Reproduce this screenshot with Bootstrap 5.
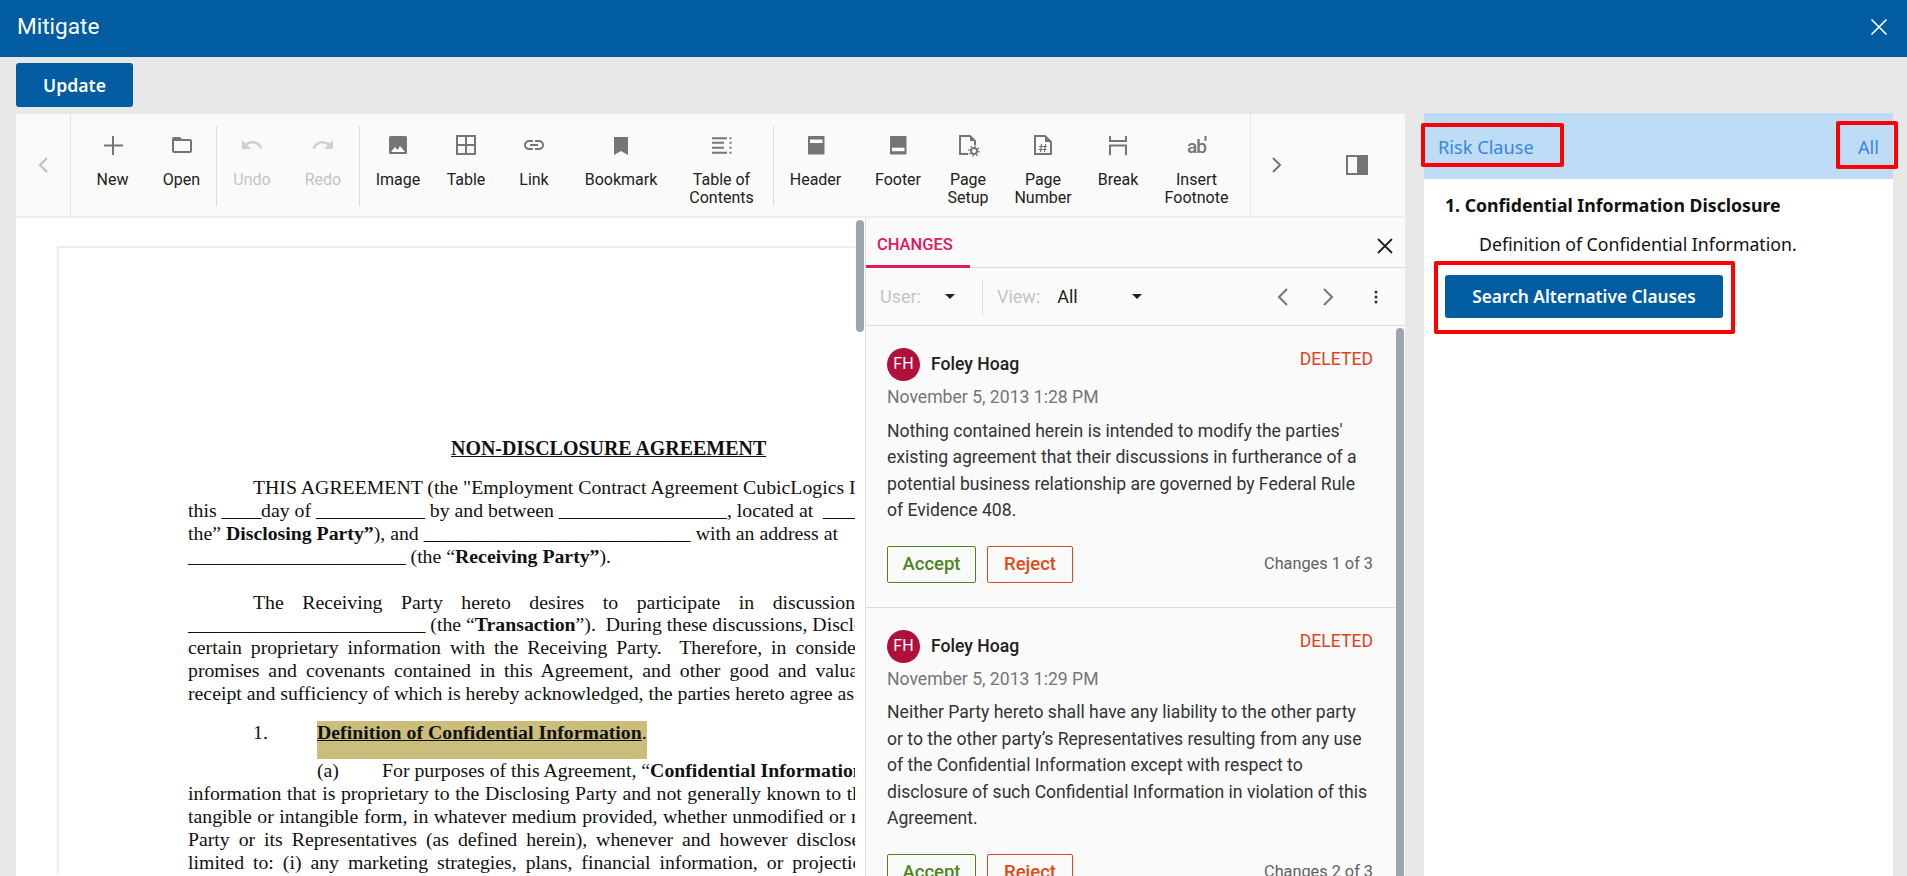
<!DOCTYPE html>
<html lang="en">
<head>
  <meta charset="UTF-8" />
  <meta name="viewport" content="width=device-width, initial-scale=1.0"/>
  <title>Mitigate</title>
  <link href="https://cdn.jsdelivr.net/npm/bootstrap@5.3.3/dist/css/bootstrap.min.css" rel="stylesheet">
  <style>
    body {
      background-color: #e8e8e8;
      font-family: Roboto, "Liberation Sans", sans-serif;
      color: #212121;
    }
    .app-head { height: 57px; background: #015ca1; padding: 0 19px 4px 17px; font-size: 22.6px; }
    .action-bar { height: 56px; padding: 6px 16px 0; }
    .btn-brand {
      background: #015ca1; color: #fff; border: 0; border-radius: 3px;
      font-family: "Noto Sans", sans-serif; font-weight: 600;
    }
    .btn-brand:hover { background: #015ca1; color: #fff; }
    .btn-update { width: 117px; height: 44px; font-size: 17.6px; padding: 0; }
    .workspace { height: 763px; padding-left: 16px; }
    .editor { width: 1389px; padding-top: 1px; }
    .tool-strip { height: 104px; background: #fafafa; border-bottom: 2px solid #eee; font-size: 16px; flex: none; }
    .nav-end { width: 55px; flex: none; border-right: 1px solid #e4e4e4; }
    .tool-tail { padding-left: 7px; flex: none; }
    .tool-item { flex: none; padding-top: 19px; line-height: 17.5px; color: #212121; }
    .tool-item svg { display: block; margin: 0 auto 14px; }
    .tool-item.is-off { color: #c4c4c4; }
    .tool-rule { width: 1px; height: 80px; margin-top: 12px; background: #dcdcdc; flex: none; }
    .tail-end { border-left: 1px solid #e4e4e4; margin-left: 4px; width: 155px; flex: none; padding-left: 20px; }
    .pane-icon { margin-left: 63px; }
    .editor-body { height: 658px; }
    .doc-area { width: 849px; background: #fff; overflow: hidden; }
    .doc-page {
      margin: 28px 0 0 41px; padding: 189px 0 0 129px; width: 798px;
      border: solid #eee; border-width: 2px 0 0 2px;
      font-family: "Liberation Serif", serif; font-size: 19.8px; line-height: 22.9px; color: #111;
      overflow: hidden;
    }
    .doc-line { white-space: nowrap; }
    .doc-title { font-weight: 700; text-decoration: underline; margin-left: 263px; font-size: 19.95px; }
    .doc-para { margin-top: 23px; }
    .doc-first { margin-top: 16px; }
    .in-1 { padding-left: 65px; }
    .in-2 { padding-left: 129px; }
    .hl-row { display: flex; height: 38px; margin-top: 16px; }
    .hl-num { width: 129px; padding-left: 65px; }
    .hl-text { width: 330px; background: #cbbd7c; font-weight: 700; white-space: nowrap; }
    .sp-1 { word-spacing: 13.6px; }
    .sp-2 { word-spacing: 4px; }
    .sp-3 { word-spacing: 0.6px; }
    .sub-tab { display: inline-block; width: 65px; }
    .doc-thumb { position: absolute; right: 1px; top: 2px; width: 8px; height: 112px; border-radius: 4px; background: #9ba6af; }
    .track-pane { width: 540px; background: #fafafa; border-left: 1px solid #e0e0e0; }
    .track-tabs { height: 50px; border-bottom: 1px solid #dcdcdc; flex: none; }
    .track-tab { width: 104px; height: 50px; padding: 15px 0 0 11px; border-bottom: 3px solid #e0185d; color: #e0185d; font-size: 16.5px; font-weight: 500; }
    .tab-close { margin: 19px 11px 0 0; }
    .track-tools { height: 58px; border-bottom: 1px solid #dcdcdc; padding: 0 25px 0 14px; font-size: 18px; flex: none; }
    .muted-label { color: #c4c4c4; }
    .tri { width: 0; height: 0; border: solid transparent; border-width: 5px 5px 0; border-top-color: #212121; display: inline-block; }
    .tri-user { margin-left: 24px; }
    .tool-sep { width: 1px; height: 36px; background: #dcdcdc; margin-left: 27px; }
    .view-label { margin-left: 14px; }
    .view-value { margin-left: 17px; }
    .tri-view { margin-left: 54px; }
    .nav-next { margin-left: 33px; }
    .nav-more { margin-left: 36px; }
    .track-list { overflow: hidden; flex: 1 1 auto; }
    .track-card { padding: 22px 23px 24px 21px; border-bottom: 1px solid #dcdcdc; width: 530px; }
    .track-thumb { position: absolute; right: 1px; top: 2px; width: 8px; height: 560px; border-radius: 4px 4px 0 0; background: #9ba6af; }
    .avatar-dot { width: 33px; height: 33px; border-radius: 50%; background: #b0103a; color: #fff; font-size: 16px; line-height: 31px; text-align: center; }
    .who-name { font-size: 17.6px; font-weight: 500; color: #212121; margin-left: 11px; }
    .del-tag { color: #e0431b; font-size: 17.6px; line-height: 22px; }
    .when-text { color: #757575; font-size: 17.6px; line-height: 20px; margin-top: 6px; }
    .body-text { font-size: 17.6px; line-height: 26.5px; margin: 10.5px 0 22px; color: #333; }
    .btn-acc, .btn-rej { height: 37px; font-size: 18.5px; font-weight: 500; padding: 0; background: transparent; border-radius: 2px; line-height: 33px; }
    .btn-acc { width: 89px; color: #4d841d; border: 1px solid #4d841d; }
    .btn-rej { width: 86px; color: #df4a17; border: 1px solid #df4a17; margin-left: 11px; }
    .count-text { color: #616161; font-size: 16.3px; }
    .clause-pane { width: 469px; margin-left: 19px; background: #fff; font-family: "Noto Sans", sans-serif; }
    .clause-head { height: 66px; background: #bedcf5; color: #3a86d8; font-size: 18.2px; padding: 4px 14px 0 14px; }
    .clause-body { padding: 14px 21px; color: #111; }
    .clause-title { font-weight: 700; font-size: 17.7px; line-height: 24px; }
    .clause-sub { font-size: 17.7px; line-height: 24px; margin: 15px 0 0 34px; }
    .btn-search { display: block; width: 278px; height: 43px; margin-top: 19px; padding: 0; font-size: 17.3px; }
    .red-box { position: absolute; border: 4px solid #f00; border-radius: 2px; pointer-events: none; }
    .box-risk { left: -3px; top: 10px; width: 143px; height: 44px; }
    .box-all { left: 412px; top: 8px; width: 62px; height: 48px; }
    .box-search { left: 10px; top: 148px; width: 301px; height: 73px; }
  </style>
</head>
<body class="vh-100 overflow-hidden">
  <div class="app-head d-flex align-items-center justify-content-between text-white">
    <span>Mitigate</span>
    <svg width="18" height="18" viewBox="0 0 18 18"><path d="M1.5 1.5l15 15M16.5 1.5l-15 15" stroke="#fff" stroke-width="1.6" fill="none"/></svg>
  </div>
  <div class="action-bar"><button class="btn btn-brand btn-update">Update</button></div>

  <div class="workspace d-flex">
    <div class="editor d-flex flex-column">
      <div class="tool-strip d-flex" id="tool-strip">
        <div class="nav-end d-flex align-items-center justify-content-center">
          <svg width="12" height="18" viewBox="0 0 12 18"><path d="M10 2L3 9l7 7" stroke="#bdbdbd" stroke-width="2" fill="none"/></svg>
        </div>
        <div class="tool-tail d-flex text-center" id="tool-items"></div>
        <div class="tail-end d-flex align-items-center">
          <svg width="12" height="18" viewBox="0 0 12 18"><path d="M2 2l7 7-7 7" stroke="#757575" stroke-width="2" fill="none"/></svg>
          <svg class="pane-icon" width="22" height="20" viewBox="0 0 22 20"><path d="M1 1h20v18H1z" fill="none" stroke="#757575" stroke-width="2"/><path d="M11 1h10v18H11z" fill="#757575"/></svg>
        </div>
      </div>

      <div class="editor-body d-flex">
        <div class="doc-area position-relative">
          <div class="doc-page">
            <div class="doc-line doc-title">NON-DISCLOSURE AGREEMENT</div>
            <div class="doc-first">
              <div class="doc-line in-1">THIS AGREEMENT (the "Employment Contract Agreement CubicLogics Inc.</div>
              <div class="doc-line">this ____day of ___________ by and between _________________, located at &nbsp;______</div>
              <div class="doc-line">the” <b>Disclosing Party”</b>), and ___________________________ with an address at</div>
              <div class="doc-line">______________________ (the “<b>Receiving Party”</b>).</div>
            </div>
            <div class="doc-para">
              <div class="doc-line in-1 sp-1">The Receiving Party hereto desires to participate in discussions</div>
              <div class="doc-line">________________________ (the “<b>Transaction</b>”).&nbsp; During these discussions, Disclosing</div>
              <div class="doc-line sp-2">certain proprietary information with the Receiving Party.&nbsp; Therefore, in consideration</div>
              <div class="doc-line sp-2">promises and covenants contained in this Agreement, and other good and valuable</div>
              <div class="doc-line">receipt and sufficiency of which is hereby acknowledged, the parties hereto agree as</div>
            </div>
            <div class="hl-row">
              <div class="hl-num">1.</div>
              <div class="hl-text"><u>Definition of Confidential Information</u><span class="fw-normal">.</span></div>
            </div>
            <div>
              <div class="doc-line in-2"><span class="sub-tab">(a)</span>For purposes of this Agreement, “<b>Confidential Information</b></div>
              <div class="doc-line sp-3">information that is proprietary to the Disclosing Party and not generally known to the</div>
              <div class="doc-line sp-3">tangible or intangible form, in whatever medium provided, whether unmodified or modified</div>
              <div class="doc-line sp-2">Party or its Representatives (as defined herein), whenever and however disclosed</div>
              <div class="doc-line sp-2">limited to: (i) any marketing strategies, plans, financial information, or projections</div>
            </div>
          </div>
          <div class="doc-thumb"></div>
        </div>

        <div class="track-pane d-flex flex-column">
          <div class="track-tabs d-flex justify-content-between">
            <div class="track-tab">CHANGES</div>
            <svg class="tab-close" width="18" height="18" viewBox="0 0 18 18"><path d="M2 2l14 14M16 2L2 16" stroke="#212121" stroke-width="1.8" fill="none"/></svg>
          </div>
          <div class="track-tools d-flex align-items-center">
            <span class="muted-label">User:</span>
            <span class="tri tri-user"></span>
            <span class="tool-sep"></span>
            <span class="muted-label view-label">View:</span>
            <span class="view-value">All</span>
            <span class="tri tri-view"></span>
            <svg class="ms-auto" width="14" height="20" viewBox="0 0 14 20"><path d="M12 2L4 10l8 8" stroke="#757575" stroke-width="2" fill="none"/></svg>
            <svg class="nav-next" width="14" height="20" viewBox="0 0 14 20"><path d="M2 2l8 8-8 8" stroke="#757575" stroke-width="2" fill="none"/></svg>
            <svg class="nav-more" width="8" height="16" viewBox="0 0 8 16"><circle cx="4" cy="3" r="1.5" fill="#333"/><circle cx="4" cy="8" r="1.5" fill="#333"/><circle cx="4" cy="13" r="1.5" fill="#333"/></svg>
          </div>
          <div class="track-list position-relative">
            <div id="track-cards"></div>
            <div class="track-thumb"></div>
          </div>
        </div>
      </div>
    </div>

    <div class="clause-pane position-relative">
      <div class="clause-head d-flex align-items-center justify-content-between">
        <span>Risk Clause</span><span>All</span>
      </div>
      <div class="clause-body">
        <div class="clause-title">1. Confidential Information Disclosure</div>
        <div class="clause-sub">Definition of Confidential Information.</div>
        <button class="btn btn-brand btn-search">Search Alternative Clauses</button>
      </div>
      <div class="red-box box-risk"></div>
      <div class="red-box box-all"></div>
      <div class="red-box box-search"></div>
    </div>
  </div>

  <script src="https://cdn.jsdelivr.net/npm/bootstrap@5.3.3/dist/js/bootstrap.bundle.min.js"></script>
  <script>
    const icons = {
      plus: '<path d="M12 3v19M3 12.5h19" stroke="#757575" stroke-width="2" fill="none"/>',
      folder: '<path d="M20 6h-8l-2-2H4c-1.1 0-2 .9-2 2v12c0 1.1.9 2 2 2h16c1.1 0 2-.9 2-2V8c0-1.1-.9-2-2-2zm0 12H4V8h16v10z" fill="#757575"/>',
      undo: '<path d="M12.500 8c-2.650 0-5.050.99-6.900 2.600L2 7v9h9l-3.620-3.620c1.390-1.160 3.160-1.880 5.120-1.880 3.540 0 6.550 2.310 7.600 5.500l2.370-.78C21.080 11.030 17.150 8 12.500 8z" fill="#d0d0d0"/>',
      redo: '<path d="M18.400 10.600C16.550 8.990 14.150 8 11.500 8c-4.650 0-8.580 3.030-9.960 7.220L3.900 16c1.050-3.190 4.050-5.500 7.600-5.500 1.950 0 3.730.72 5.120 1.880L13 16h9V7l-3.600 3.600z" fill="#d0d0d0"/>',
      image: '<rect x="3" y="3" width="18" height="18" rx="1.500" fill="#757575"/><path d="M5 19l4-5 2.500 3 2.500-4 5 6z" fill="#fff"/>',
      table: '<path d="M3 3h18v18H3zM12 3v18M3 12h18" fill="none" stroke="#757575" stroke-width="2"/>',
      link: '<path d="M3.900 12c0-1.710 1.390-3.100 3.100-3.100h4V7H7c-2.760 0-5 2.240-5 5s2.240 5 5 5h4v-1.900H7c-1.710 0-3.100-1.390-3.100-3.100zM8 13h8v-2H8v2zm9-6h-4v1.900h4c1.710 0 3.100 1.390 3.100 3.100s-1.390 3.100-3.100 3.100h-4V17h4c2.760 0 5-2.240 5-5s-2.240-5-5-5z" fill="#757575"/>',
      bookmark: '<path d="M5 4h14v18l-7-4-7 4z" fill="#757575"/>',
      toc: '<path d="M2 5.300h15M2 9.700h12M2 14.700h12M2 19.700h15" stroke="#757575" stroke-width="2" fill="none"/><path d="M19.500 4.300h2v2h-2zM19.500 8.700h2v2h-2zM19.500 13.700h2v2h-2zM19.500 18.700h2v2h-2z" fill="#757575"/>',
      header: '<rect x="4" y="3" width="16.500" height="18.500" rx="1" fill="#757575"/><path d="M6 6.500h12.500V10H6z" fill="#fff"/>',
      footer: '<rect x="4" y="3" width="16.500" height="18.500" rx="1" fill="#757575"/><path d="M6 14.700h12.500v3.500H6z" fill="#fff"/>',
      setup: '<path d="M12 21H4V3h10l5 5v4" fill="none" stroke="#757575" stroke-width="2"/><path d="M14 3v5h5" fill="#757575"/><circle cx="18" cy="18" r="3" fill="none" stroke="#757575" stroke-width="2"/><circle cx="18" cy="18" r="5" fill="none" stroke="#757575" stroke-width="1.500" stroke-dasharray="1.500 2.400"/>',
      number: '<path d="M4 3h10l6 6v12H4z" fill="none" stroke="#757575" stroke-width="2"/><path d="M14 3v6h6" fill="#757575"/><path d="M10.500 11l-1 8M14.500 11l-1 8M8 13.500h8M7.500 16.500h8" stroke="#757575" stroke-width="1.200" fill="none"/>',
      page: '<path d="M4 3v5h16V3M4 22v-9.500h16V22" fill="none" stroke="#757575" stroke-width="2"/>',
      note: '<text x="2" y="20" font-family="Roboto" font-size="19" font-weight="500" letter-spacing="-1" fill="#757575">ab</text><path d="M20.500 3v5" stroke="#757575" stroke-width="2"/>'
    };

    const tools = [
      { label: "New", icon: "plus", w: 69 },
      { label: "Open", icon: "folder", w: 69, rule: true },
      { label: "Undo", icon: "undo", w: 70, off: true },
      { label: "Redo", icon: "redo", w: 72, off: true, rule: true },
      { label: "Image", icon: "image", w: 76 },
      { label: "Table", icon: "table", w: 60 },
      { label: "Link", icon: "link", w: 76 },
      { label: "Bookmark", icon: "bookmark", w: 98 },
      { label: "Table of<br>Contents", icon: "toc", w: 103, rule: true },
      { label: "Header", icon: "header", w: 83 },
      { label: "Footer", icon: "footer", w: 82 },
      { label: "Page<br>Setup", icon: "setup", w: 58 },
      { label: "Page<br>Number", icon: "number", w: 92 },
      { label: "Break", icon: "page", w: 58 },
      { label: "Insert<br>Footnote", icon: "note", w: 99 }
    ];

    const strip = document.getElementById("tool-items");
    tools.forEach(t => {
      strip.innerHTML += `
        <div class="tool-item${t.off ? " is-off" : ""}" style="width:${t.w}px">
          <svg width="24" height="24" viewBox="0 0 24 24">${icons[t.icon]}</svg>
          ${t.label}
        </div>${t.rule ? '<div class="tool-rule"></div>' : ""}`;
    });

    const changes = [
      { when: "November 5, 2013 1:28 PM", n: 1, text: "Nothing contained herein is intended to modify the parties' existing agreement that their discussions in furtherance of a potential business relationship are governed by Federal Rule of Evidence 408." },
      { when: "November 5, 2013 1:29 PM", n: 2, text: "Neither Party hereto shall have any liability to the other party or to the other party’s Representatives resulting from any use of the Confidential Information except with respect to disclosure of such Confidential Information in violation of this Agreement." }
    ];

    const list = document.getElementById("track-cards");
    changes.forEach(c => {
      list.innerHTML += `
        <div class="track-card">
          <div class="d-flex justify-content-between">
            <div class="d-flex align-items-center">
              <div class="avatar-dot">FH</div>
              <div class="who-name">Foley Hoag</div>
            </div>
            <div class="del-tag">DELETED</div>
          </div>
          <div class="when-text">${c.when}</div>
          <div class="body-text">${c.text}</div>
          <div class="d-flex align-items-center">
            <button class="btn btn-acc">Accept</button>
            <button class="btn btn-rej me-auto">Reject</button>
            <span class="count-text">Changes ${c.n} of 3</span>
          </div>
        </div>`;
    });
  </script>
</body>
</html>
